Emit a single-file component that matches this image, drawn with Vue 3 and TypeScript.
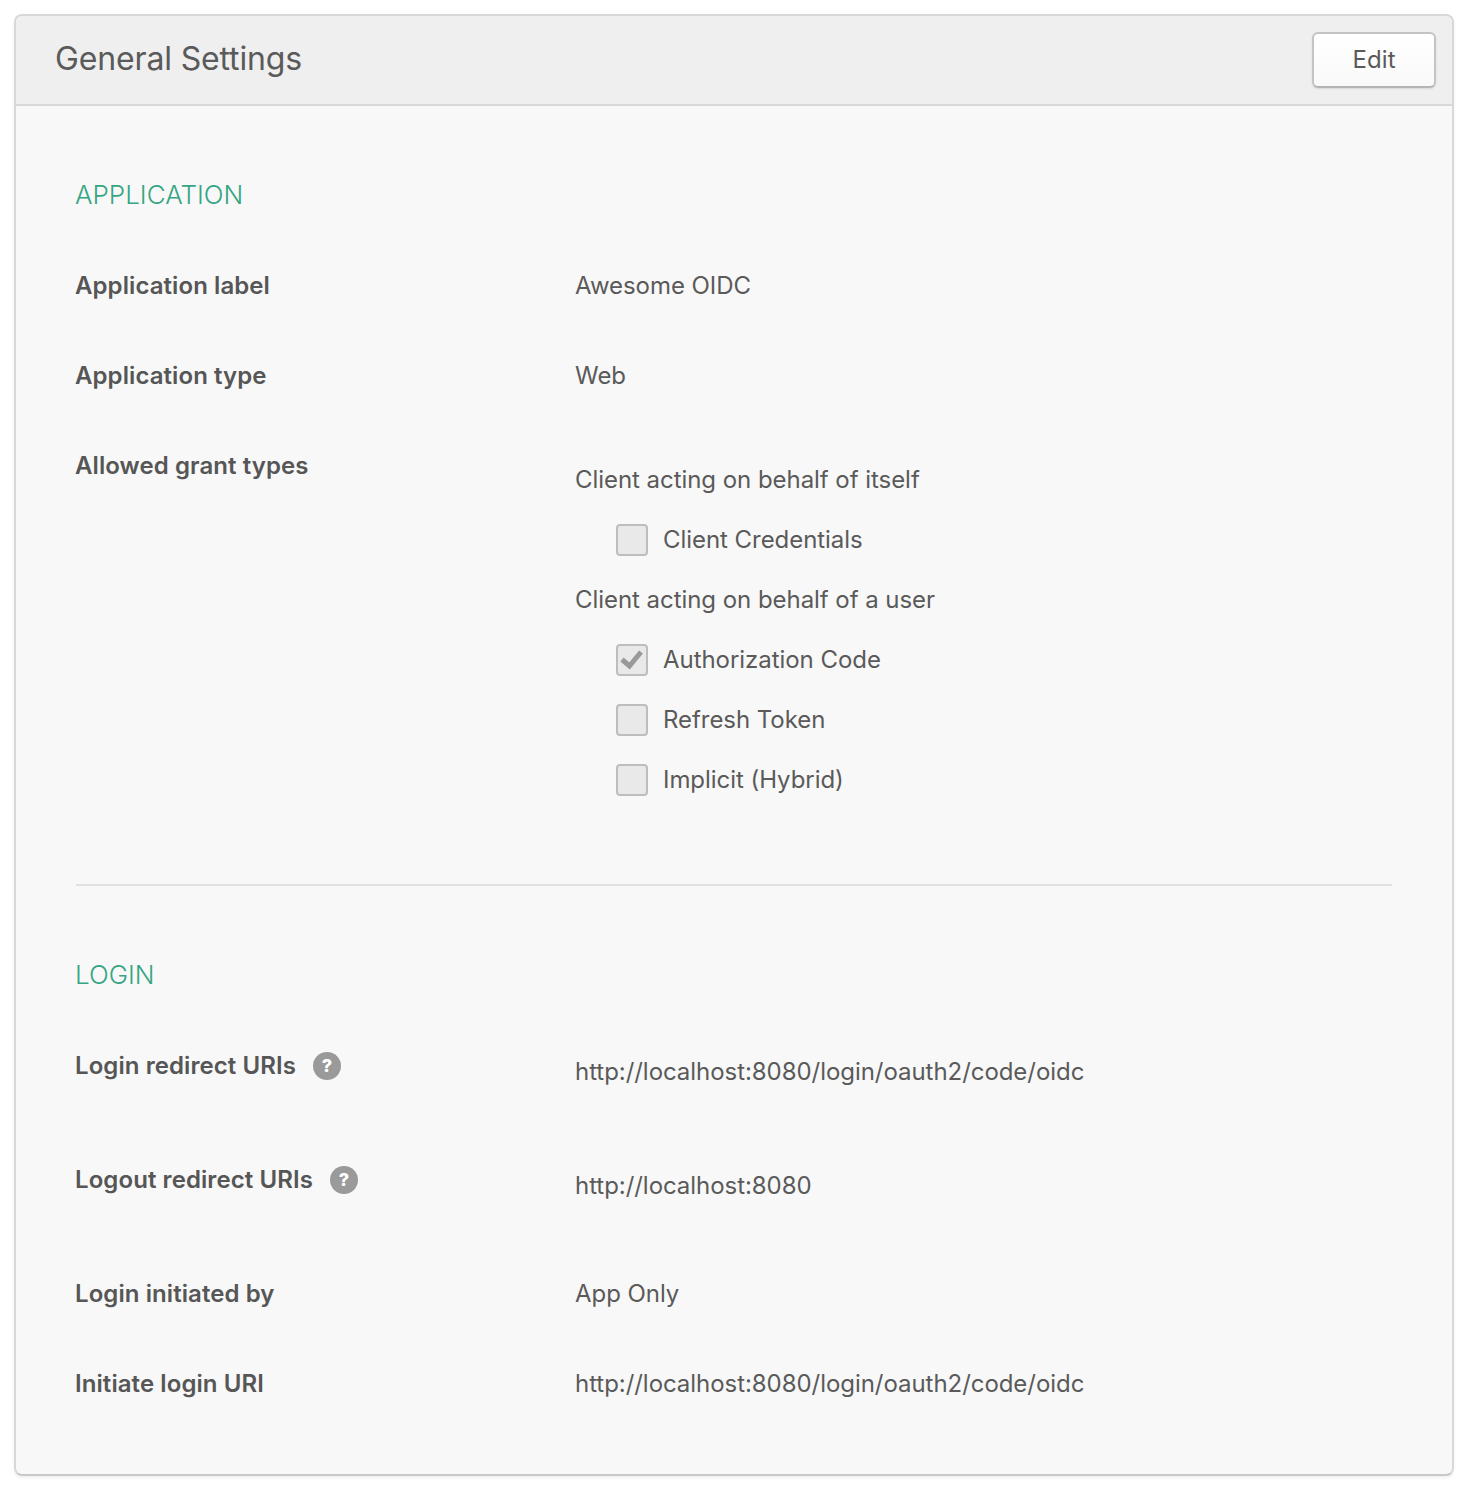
<script setup lang="ts">
interface Grant { label: string; checked: boolean }
const selfGrants: Grant[] = [{ label: 'Client Credentials', checked: false }]
const userGrants: Grant[] = [
  { label: 'Authorization Code', checked: true },
  { label: 'Refresh Token', checked: false },
  { label: 'Implicit (Hybrid)', checked: false },
]
</script>

<template>
  <div class="page">
    <section class="panel">
      <header class="head">
        <h2 class="title">General Settings</h2>
        <button class="edit" type="button">Edit</button>
      </header>
      <div class="body">
        <h3 class="section">APPLICATION</h3>
        <div class="row"><div class="label">Application label</div><div class="value">Awesome OIDC</div></div>
        <div class="row"><div class="label">Application type</div><div class="value">Web</div></div>
        <div class="row grants">
          <div class="label">Allowed grant types</div>
          <div class="value group">
            <div class="line">Client acting on behalf of itself</div>
            <div v-for="g in selfGrants" :key="g.label" class="check">
              <span class="box"></span>
              {{ g.label }}
            </div>
            <div class="line">Client acting on behalf of a user</div>
            <div v-for="g in userGrants" :key="g.label" class="check">
              <span class="box">
                <svg v-if="g.checked" viewBox="0 0 28 28" width="28" height="28"><path d="M4 13.500l7.500 6.500L23 6" fill="none" stroke="#999" stroke-width="5" /></svg>
              </span>
              {{ g.label }}
            </div>
          </div>
        </div>
        <hr class="rule" />
        <h3 class="section">LOGIN</h3>
        <div class="row uri">
          <div class="label">Login redirect URIs<span class="help">?</span></div>
          <div class="value">http://localhost:8080/login/oauth2/code/oidc</div>
        </div>
        <div class="row uri">
          <div class="label">Logout redirect URIs<span class="help">?</span></div>
          <div class="value">http://localhost:8080</div>
        </div>
        <div class="row"><div class="label">Login initiated by</div><div class="value">App Only</div></div>
        <div class="row last"><div class="label">Initiate login URI</div><div class="value">http://localhost:8080/login/oauth2/code/oidc</div></div>
      </div>
    </section>
  </div>
</template>

<style scoped>
.page {
  width: 1470px;
  height: 1492px;
  box-sizing: border-box;
  padding: 14px 16px 0 14px;
  background: #fff;
  font-family: Inter, Lato, sans-serif;
  font-size: 24px;
  line-height: 30px;
  letter-spacing: -0.05px;
  color: #5a5a5a;
}
.panel {
  height: 1462px;
  box-sizing: border-box;
  border: 2px solid #d8d8d8;
  border-bottom-color: #c9c9c9;
  border-radius: 8px;
  background: #f8f8f8;
  box-shadow: 0 2px 3px rgba(0, 0, 0, 0.06);
  overflow: hidden;
}
.head {
  height: 90px;
  box-sizing: border-box;
  display: flex;
  align-items: center;
  justify-content: space-between;
  padding: 0 16px 0 39px;
  background: #efefef;
  border-bottom: 2px solid #d8d8d8;
}
.title {
  margin: -2px 0 0;
  font-size: 32px;
  font-weight: 400;
  line-height: 40px;
  letter-spacing: -0.15px;
  color: #5a5a5a;
}
.edit {
  width: 124px;
  height: 56px;
  box-sizing: border-box;
  border: 2px solid #c4c4c4;
  border-bottom-color: #b4b4b4;
  border-radius: 6px;
  background: linear-gradient(#fff, #f9f9f9);
  box-shadow: 0 1px 2px rgba(0, 0, 0, 0.1);
  font: inherit;
  letter-spacing: 0.1px;
  color: #5a5a5a;
  padding: 0;
}
.body {
  padding: 74px 60px 0 59px;
}
.section {
  margin: 0 0 61px;
  font-size: 26px;
  font-weight: 300;
  line-height: 30px;
  letter-spacing: 0;
  color: #36a583;
}
.row {
  display: grid;
  grid-template-columns: 500px 1fr;
  margin-bottom: 60px;
}
.row.last { margin-bottom: 0; }
.label { font-weight: 600; color: #565656; letter-spacing: 0.08px; }
.help {
  display: inline-flex;
  align-items: center;
  justify-content: center;
  width: 28px;
  height: 28px;
  margin-left: 17px;
  border-radius: 50%;
  background: #9a9a9a;
  color: #fff;
  font-size: 18px;
  font-weight: 800;
  letter-spacing: 0;
  vertical-align: 2px;
}
.uri .value { padding: 6px 0 18px; }
.grants { margin-bottom: 89px; }
.group { padding-top: 14px; }
.line { height: 30px; margin-bottom: 30px; }
.check {
  height: 30px;
  margin-bottom: 30px;
  display: flex;
  align-items: center;
  padding-left: 41px;
}
.check:last-child { margin-bottom: 0; }
.box {
  width: 32px;
  height: 32px;
  flex: none;
  box-sizing: border-box;
  margin-right: 15px;
  border: 2px solid #bdbdbd;
  border-radius: 4px;
  background: #e9e9e9;
  display: flex;
  align-items: center;
  justify-content: center;
}
.rule {
  height: 2px;
  margin: 0 0 74px 1px;
  border: 0;
  background: #e0e0e0;
}
</style>
